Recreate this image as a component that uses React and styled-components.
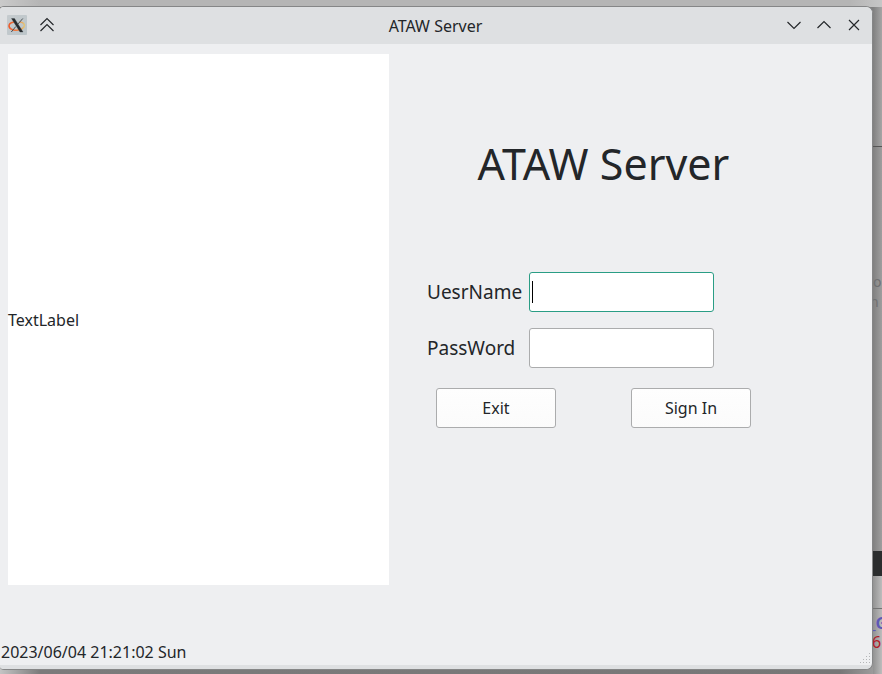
import React from "react";
import styled, { createGlobalStyle } from "styled-components";

const Global = createGlobalStyle`
  * { box-sizing: border-box; }
  body { margin: 0; overflow: hidden; font-family: "Noto Sans", sans-serif; font-size: 16px; color: #232629; }
`;

const Desktop = styled.div`
  display: grid;
  grid-template-columns: 873px 9px;
  width: 882px;
  height: 674px;
  overflow: hidden;
  background:
    linear-gradient(90deg, #c4c4c4, #7b7b7b 40px, #777 840px, #a5a5a5) 0 660px / 882px 14px no-repeat,
    linear-gradient(90deg, #cacaca, #b5b5b5 40px, #b5b5b5 850px, #c6c6c6) 0 0 / 882px 7px no-repeat,
    linear-gradient(90deg, #808080 873px, #a5a5a5 882px);
`;

const Window = styled.main`
  display: flex;
  flex-direction: column;
  margin-top: 6px;
  height: 664px;
  border: 1px solid #858687;
  border-left: 0;
  border-radius: 4px 7px 7px 4px;
  background: #eeeff1;
  overflow: hidden;
`;

const TitleBar = styled.header`
  flex: none;
  display: grid;
  grid-template-columns: 60px 1fr 93px;
  height: 37px;
  align-items: center;
  background: #dee0e2;
`;

const Controls = styled.div`
  display: flex;
  align-items: center;
  gap: ${(p) => p.$gap}px;
  padding-left: ${(p) => p.$inset}px;
  padding-bottom: 2px;
`;

const Title = styled.h1`
  margin: 0;
  padding-left: 32px;
  font-size: 16px;
  line-height: 22px;
  font-weight: 400;
  text-align: center;
`;

const Content = styled.div`
  flex: none;
  display: grid;
  grid-template-columns: 381px 1fr;
  height: 551px;
  padding: 10px 0 10px 8px;
`;

const Preview = styled.section`
  display: flex;
  align-items: center;
  background: #fff;
  line-height: 22px;
`;

const Login = styled.section`
  display: flex;
  flex-direction: column;
  padding-left: 38px;
`;

const Heading = styled.h2`
  margin: 80px 0 78px 50.5px;
  font-size: 43px;
  line-height: 60px;
  font-weight: 400;
`;

const Field = styled.label`
  display: grid;
  grid-template-columns: 102px 185px;
  align-items: center;
  height: 40px;
  margin-bottom: 16px;
  font-size: 19px;
`;

const FieldName = styled.span`
  line-height: 26px;
`;

const Input = styled.div`
  display: flex;
  align-items: center;
  height: 40px;
  padding-left: 2px;
  border: 1px solid ${(p) => (p.$focused ? "#2a9d85" : "#abacad")};
  border-radius: 3px;
  background: #fff;
`;

const Caret = styled.span`
  width: 1px;
  height: 22px;
  background: #000;
`;

const Actions = styled.div`
  display: flex;
  gap: 75px;
  margin: 4px 0 0 9px;
`;

const Button = styled.button`
  width: 120px;
  height: 40px;
  padding: 0;
  border: 1px solid #abacad;
  border-radius: 3px;
  background: linear-gradient(#fefefe, #fbfbfb);
  color: inherit;
  font: 16px "Noto Sans", sans-serif;
`;

const StatusBar = styled.footer`
  flex: 1;
  display: flex;
  align-items: flex-end;
  justify-content: space-between;
  padding-left: 1px;
  border-bottom: 4px solid #dee0e2;
  line-height: 22px;
`;

const StatusText = styled.span`
  padding-bottom: 2px;
`;

const Backdrop = styled.aside`
  display: grid;
  grid-template-rows: 126px 20px 259px 25px 32px 5px 19px 39px;
  margin-top: 146px;
  overflow: hidden;
  background:
    linear-gradient(90deg, #929292, #bcbcbc) 0 430px / 9px 98px no-repeat,
    linear-gradient(90deg, #808080, #9e9e9e);
`;

const Strip = styled.div`
  background: ${(p) => p.$fill || "transparent"};
  border-top: ${(p) => (p.$rule ? `1px solid ${p.$rule}` : "0")};
`;

const Fragment = styled.div`
  white-space: nowrap;
  margin-left: ${(p) => p.$shift || 0}px;
  color: ${(p) => p.$tint};
  font: ${(p) => p.$weight || 400} ${(p) => p.$size || 14}px / 20px "Noto Sans", sans-serif;
`;

const Line = styled.path`
  fill: none;
  stroke: #232629;
  stroke-width: 1.15;
`;

const Glyph = ({ d }) => (
  <svg width="16" height="16" viewBox="0 0 16 16"><Line d={d} /></svg>
);

const AppIcon = () => (
  <svg width="20" height="20" viewBox="0 0 20 20">
    <defs>
      <linearGradient id="tile" x1="0" y1="0" x2="1" y2="1">
        <stop stopColor="#c5cbce" /><stop offset="1" stopColor="#bcc5c9" />
      </linearGradient>
      <linearGradient id="ring">
        <stop stopColor="#ee5929" /><stop offset=".55" stopColor="#ed8145" /><stop offset="1" stopColor="#e3c577" />
      </linearGradient>
    </defs>
    <rect width="20" height="20" rx="1" fill="url(#tile)" />
    <path d="M7 7C1 8 1 12 4 14C8 16.5 15 15 17 12C18.5 9 16 7 12.5 7" fill="none" stroke="url(#ring)" strokeWidth="1.5" />
    <path d="M4.5 3.5H7.5L16 17H13Z" fill="#272b2e" stroke="#272b2e" strokeWidth=".3" />
    <path d="M15.8 3.5L10.8 9.2M8.8 11.5L4.3 17" stroke="#4a5054" strokeWidth="1" />
  </svg>
);

const Grip = () => (
  <svg width="12" height="12" viewBox="0 0 12 12" fill="#b3b5b7">
    {[[9, 0], [6, 3], [9, 3], [3, 6], [6, 6], [9, 6], [0, 9], [3, 9], [6, 9], [9, 9]].map(([x, y]) => (
      <rect key={`${x}-${y}`} x={x} y={y} width="1" height="1" />
    ))}
  </svg>
);

export default function App() {
  return (
    <>
      <Global />
      <Desktop>
        <Window>
          <TitleBar>
            <Controls $inset={7} $gap={12}>
              <AppIcon />
              <Glyph d="M1.5 8L8 1.5L14.5 8M1.5 14L8 7.5L14.5 14" />
            </Controls>
            <Title>ATAW Server</Title>
            <Controls $inset={7} $gap={14}>
              <Glyph d="M1.5 5L8 11.5L14.5 5" />
              <Glyph d="M1.5 11L8 4.5L14.5 11" />
              <Glyph d="M3 3L13 13M13 3L3 13" />
            </Controls>
          </TitleBar>
          <Content>
            <Preview>TextLabel</Preview>
            <Login>
              <Heading>ATAW Server</Heading>
              <Field><FieldName>UesrName</FieldName><Input $focused><Caret /></Input></Field>
              <Field><FieldName>PassWord</FieldName><Input /></Field>
              <Actions>
                <Button>Exit</Button>
                <Button>Sign In</Button>
              </Actions>
            </Login>
          </Content>
          <StatusBar>
            <StatusText>2023/06/04 21:21:02 Sun</StatusText>
            <Grip />
          </StatusBar>
        </Window>
        <Backdrop>
          <Strip $rule="#555" />
          <Fragment $tint="#6f7071">o</Fragment>
          <Strip>
            <Fragment $tint="#6f7071" $shift={-3}>n</Fragment>
          </Strip>
          <Strip $fill="#2b2d2e" />
          <Strip />
          <Strip $rule="#737373" />
          <Fragment $tint="#5e59b5" $weight={700} $shift={-4} $size={16}>_G</Fragment>
          <Fragment $tint="#b21b28" $shift={-1} $size={16}>6</Fragment>
        </Backdrop>
      </Desktop>
    </>
  );
}
